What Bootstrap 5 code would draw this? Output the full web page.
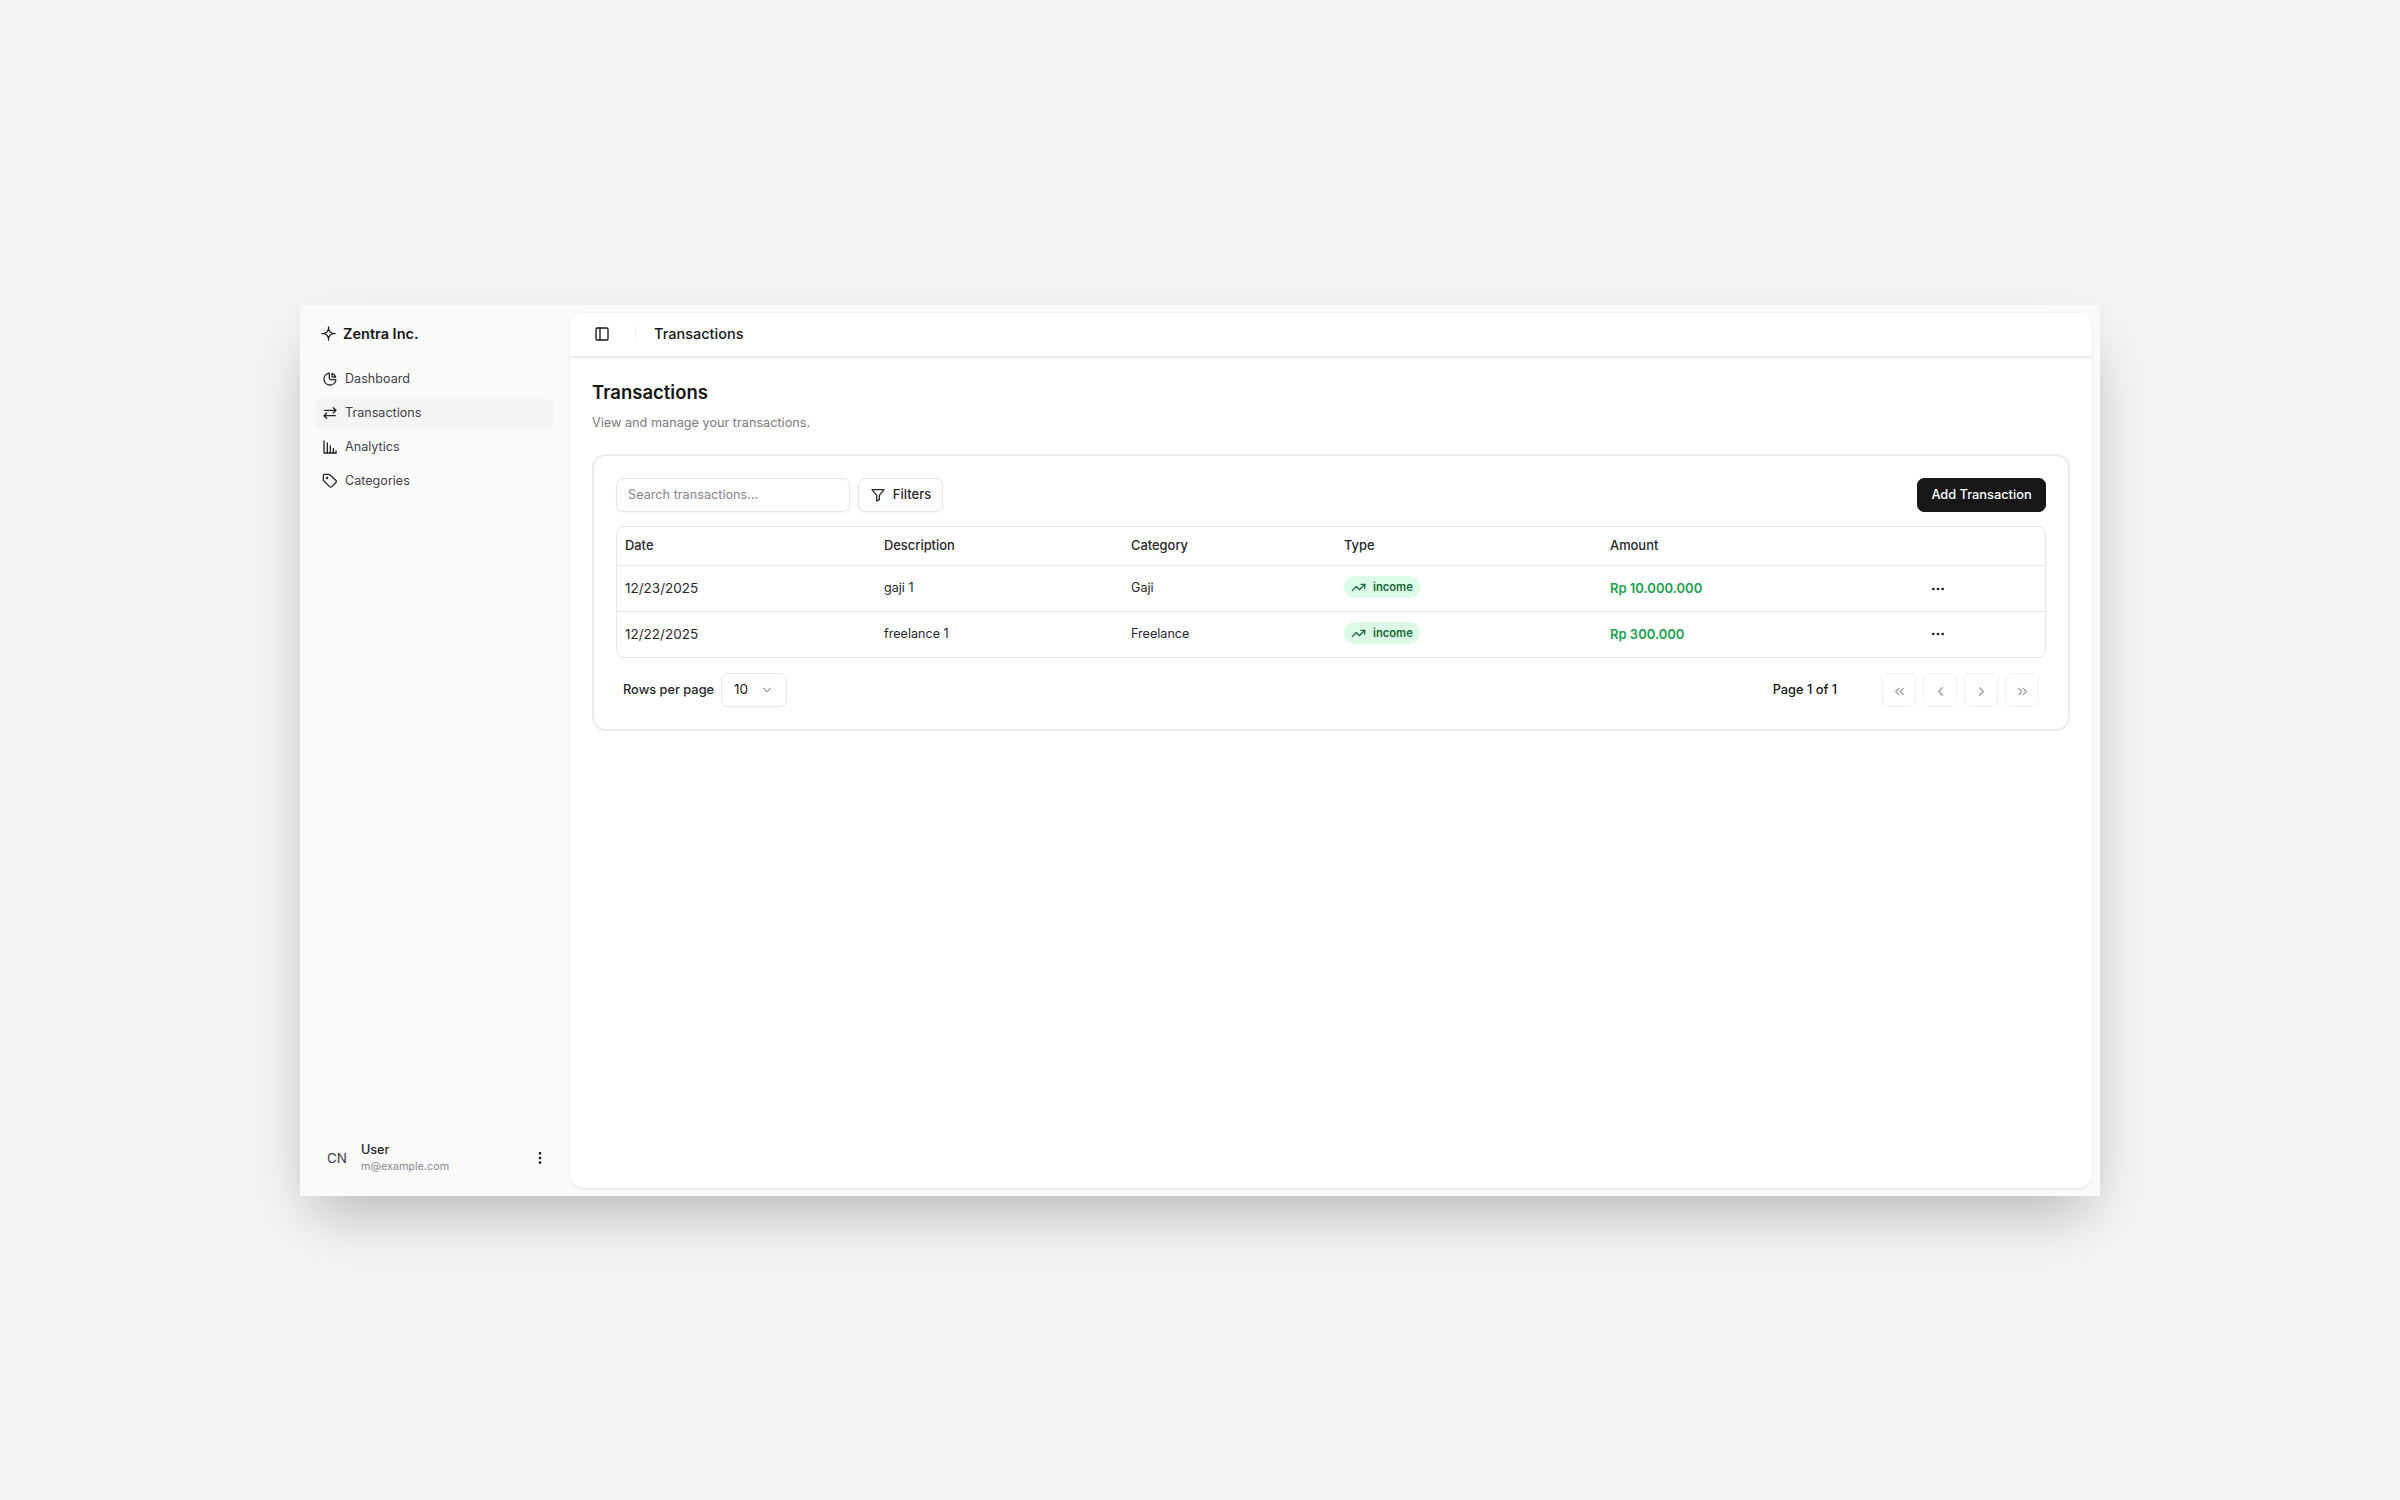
<!DOCTYPE html>
<html lang="en">
<head>
    <meta charset="UTF-8">
    <meta name="viewport" content="width=device-width, initial-scale=1.0">
    <title>Transactions</title>
    <link href="https://cdn.jsdelivr.net/npm/bootstrap@5.3.0/dist/css/bootstrap.min.css" rel="stylesheet">
    <style>
        body {
            background-color: #f3f4f6;
            color: #171717;
            font-family: Inter, "Liberation Sans", sans-serif;
            font-size: 13.5px;
        }
        svg { flex-shrink: 0; }
        .ico {
            fill: none;
            stroke: currentColor;
            stroke-width: 2;
            stroke-linecap: round;
            stroke-linejoin: round;
        }

        /* App window */
        .app-window {
            width: 1800px;
            height: 891px;
            background: #fafafa;
            box-shadow: 0 28px 56px -12px rgba(0, 0, 0, .25);
        }

        /* Sidebar */
        .side-col {
            width: 270px;
            flex-shrink: 0;
            padding: 0 16px 0 16px;
        }
        .brand-row {
            height: 44px;
            margin-top: 7px;
            padding-left: 5px;
            gap: 7px;
            font-size: 14.5px;
            font-weight: 600;
        }
        .side-link {
            height: 30px;
            margin-bottom: 4px;
            padding-left: 6px;
            gap: 7px;
            border-radius: 6px;
            color: #3f3f46;
            text-decoration: none;
            font-size: 12.6px;
        }
        .side-link svg { color: #27272a; margin-top: -1px; }
        .side-link.is-active { background: #f4f4f5; }
        .side-nav { margin-top: 9px; }
        .user-row { padding: 0 6px 21px 5px; }
        .user-avatar {
            width: 32px;
            height: 28px;
            font-size: 13.5px;
            color: #3f3f46;
        }
        .user-name { font-size: 12.6px; font-weight: 500; line-height: 17px; color: #27272a; margin-top: -1px; }
        .user-mail { font-size: 10.8px; line-height: 16px; color: #8b8b8f; margin-top: 1px; }

        /* Main panel */
        .main-panel {
            min-width: 0;
            margin: 8px 8px 8px 0;
            background: #fff;
            border-radius: 14px;
            box-shadow: 0 1px 3px rgba(0, 0, 0, .1);
        }
        .top-bar {
            height: 45px;
            padding-left: 24px;
            border-bottom: 2px solid #ececee;
        }
        .bar-sep {
            width: 1px;
            height: 14px;
            margin: 0 18px 0 25px;
            background: #eeeeef;
        }
        .bar-title { font-size: 14.5px; font-weight: 500; }
        .page-body { padding: 20px 22px 0 22px; }
        .page-title { font-size: 18.5px; font-weight: 600; line-height: 28px; margin: 0 0 7px 0; }
        .page-sub { font-size: 12.7px; line-height: 20px; color: #7b7b80; margin: 0 0 21px 0; }

        /* Transactions card */
        .tx-card {
            border: 2px solid #ececee;
            border-radius: 14px;
            padding: 22px;
            height: 277px;
        }
        .tx-search {
            width: 234px;
            height: 34px;
            padding: 0 11px;
            font-size: 12.7px;
            border: 1px solid #e7e7e9;
            border-radius: 7px;
            box-shadow: 0 1px 2px rgba(0, 0, 0, .04);
        }
        .tx-search::placeholder { color: #85858a; }
        .tx-filter {
            width: 85px;
            height: 34px;
            margin-left: 8px;
            padding: 0;
            gap: 7px;
            font-size: 13px;
            font-weight: 500;
            color: #27272a;
            border: 1px solid #e7e7e9;
            border-radius: 7px;
            box-shadow: 0 1px 2px rgba(0, 0, 0, .04);
        }
        .tx-add {
            width: 129px;
            height: 34px;
            padding: 0;
            font-size: 12.8px;
            font-weight: 500;
            background: #171717;
            border-color: #171717;
            border-radius: 7px;
            color: #fff;
        }
        .tx-table-wrap {
            margin-top: 14px;
            border: 1px solid #e7e7e9;
            border-radius: 8px;
            overflow: hidden;
        }
        .tx-table {
            table-layout: fixed;
            margin: 0;
            font-size: 12.6px;
            color: #27272a;
        }
        .tx-table th, .tx-table td {
            padding: 0 8px;
            vertical-align: middle;
            border-color: #e7e7e9;
            color: #27272a;
        }
        .tx-table th { height: 39px; font-weight: 500; font-size: 12.9px; }
        .tx-table td { height: 46px; }
        .tx-table td:first-child { font-size: 13.5px; }
        .tx-table tr:last-child td { border-bottom: 0; height: 45px; }
        .tx-table th:nth-child(1) { width: 259px; }
        .tx-table th:nth-child(2) { width: 247px; }
        .tx-table th:nth-child(3) { width: 213px; }
        .tx-table th:nth-child(4) { width: 266px; }
        .tx-table th:nth-child(5) { width: 314px; }
        .income-pill {
            height: 22px;
            padding: 0 7px 0 7px;
            gap: 7px;
            background: #dcfce7;
            color: #166534;
            border-radius: 11px;
            font-size: 11.2px;
            font-weight: 600;
        }
        .tx-table td.amount-text { color: #1a9f50; font-weight: 600; font-size: 13px; }
        .dots-btn { color: #18181b; margin-left: 6px; }

        /* Pager */
        .pager-row { padding: 15px 7px 0 7px; }
        .rows-label { font-size: 12.8px; font-weight: 500; color: #27272a; }
        .rows-picker {
            width: 66px;
            height: 34px;
            margin-left: 7px;
            padding: 0 12px;
            font-size: 13.5px;
            border: 1px solid #e7e7e9;
            border-radius: 7px;
            box-shadow: 0 1px 2px rgba(0, 0, 0, .04);
        }
        .picker-caret { color: #a1a1aa; }
        .page-info { font-size: 12.8px; font-weight: 500; margin-right: 45px; }
        .page-btn {
            width: 34px;
            height: 34px;
            padding: 0;
            border: 1px solid #f0f0f1;
            border-radius: 7px;
            color: #9a9a9f;
            background: #fff;
        }
        .pager-btns { gap: 7px; }
    </style>
</head>
<body>
    <div class="d-flex justify-content-center align-items-center min-vh-100">
        <div class="app-window d-flex">

            <!-- Sidebar -->
            <aside class="side-col d-flex flex-column">
                <div class="brand-row d-flex align-items-center">
                    <svg width="15" height="15" viewBox="0 0 24 24" class="ico"><path d="M12 5 14.5 9.5 19 12 14.5 14.5 12 19 9.5 14.5 5 12 9.5 9.5Z"/><path d="M12 1.5V4M12 20v2.5M1.5 12H4M20 12h2.5"/></svg>
                    <span>Zentra Inc.</span>
                </div>
                <nav class="side-nav">
                    <a class="side-link d-flex align-items-center" href="#">
                        <svg width="16" height="16" viewBox="0 0 24 24" class="ico"><path d="M10 3.2a9 9 0 1 0 10.8 10.8 1 1 0 0 0-1-1H13a2 2 0 0 1-2-2V4a.9.9 0 0 0-1-.8"/><path d="M15 3.5A9 9 0 0 1 20.5 9H16a1 1 0 0 1-1-1Z"/></svg>
                        <span>Dashboard</span>
                    </a>
                    <a class="side-link is-active d-flex align-items-center" href="#">
                        <svg width="16" height="16" viewBox="0 0 24 24" class="ico"><path d="M21 8H4M17 4l4 4-4 4"/><path d="M3 16h17M7 12l-4 4 4 4"/></svg>
                        <span>Transactions</span>
                    </a>
                    <a class="side-link d-flex align-items-center" href="#">
                        <svg width="16" height="16" viewBox="0 0 24 24" class="ico"><path d="M3 3v18h18"/><path d="M8 21V6M12.5 21V10M17 21v-7M21 21v-3"/></svg>
                        <span>Analytics</span>
                    </a>
                    <a class="side-link d-flex align-items-center" href="#">
                        <svg width="16" height="16" viewBox="0 0 24 24" class="ico"><path d="M11.6 2.6A2 2 0 0 0 10.2 2H4a2 2 0 0 0-2 2v6.2a2 2 0 0 0 .6 1.4l8.7 8.8a2.4 2.4 0 0 0 3.4 0l6.1-6.1a2.4 2.4 0 0 0 0-3.4Z"/><circle cx="7.5" cy="7.5" r=".8"/></svg>
                        <span>Categories</span>
                    </a>
                </nav>
                <div class="user-row d-flex align-items-center mt-auto">
                    <div class="user-avatar d-flex align-items-center justify-content-center me-2">CN</div>
                    <div class="flex-grow-1">
                        <div class="user-name">User</div>
                        <div class="user-mail">m@example.com</div>
                    </div>
                    <svg width="16" height="16" viewBox="0 0 24 24" class="ico"><circle cx="12" cy="5" r="1"/><circle cx="12" cy="12" r="1"/><circle cx="12" cy="19" r="1"/></svg>
                </div>
            </aside>

            <!-- Main -->
            <main class="main-panel flex-grow-1">
                <header class="top-bar d-flex align-items-center">
                    <svg width="16" height="16" viewBox="0 0 24 24" class="ico"><rect x="3" y="3" width="18" height="18" rx="2"/><path d="M9 3v18"/></svg>
                    <div class="bar-sep"></div>
                    <span class="bar-title">Transactions</span>
                </header>
                <div class="page-body">
                    <h1 class="page-title">Transactions</h1>
                    <p class="page-sub">View and manage your transactions.</p>
                    <div class="tx-card">
                        <div class="d-flex align-items-center">
                            <input class="form-control tx-search" type="text" placeholder="Search transactions...">
                            <button class="btn tx-filter d-flex align-items-center justify-content-center" type="button">
                                <svg width="16" height="16" viewBox="0 0 24 24" class="ico"><path d="M3 4h18l-7 8.5V19l-4 2v-8.5Z"/></svg>
                                Filters
                            </button>
                            <button class="btn tx-add ms-auto" type="button">Add Transaction</button>
                        </div>
                        <div class="tx-table-wrap">
                            <table class="table tx-table">
                                <thead>
                                    <tr><th>Date</th><th>Description</th><th>Category</th><th>Type</th><th>Amount</th><th></th></tr>
                                </thead>
                                <tbody>
                                    <tr>
                                        <td>12/23/2025</td>
                                        <td>gaji 1</td>
                                        <td>Gaji</td>
                                        <td><span class="income-pill d-inline-flex align-items-center"><svg width="15" height="15" viewBox="0 0 24 24" class="ico"><path d="M22 7l-8.5 8.5-5-5L2 17"/><path d="M16 7h6v6"/></svg>income</span></td>
                                        <td class="amount-text">Rp 10.000.000</td>
                                        <td><svg class="ico dots-btn" width="16" height="16" viewBox="0 0 24 24"><circle cx="5" cy="12" r="1"/><circle cx="12" cy="12" r="1"/><circle cx="19" cy="12" r="1"/></svg></td>
                                    </tr>
                                    <tr>
                                        <td>12/22/2025</td>
                                        <td>freelance 1</td>
                                        <td>Freelance</td>
                                        <td><span class="income-pill d-inline-flex align-items-center"><svg width="15" height="15" viewBox="0 0 24 24" class="ico"><path d="M22 7l-8.5 8.5-5-5L2 17"/><path d="M16 7h6v6"/></svg>income</span></td>
                                        <td class="amount-text">Rp 300.000</td>
                                        <td><svg class="ico dots-btn" width="16" height="16" viewBox="0 0 24 24"><circle cx="5" cy="12" r="1"/><circle cx="12" cy="12" r="1"/><circle cx="19" cy="12" r="1"/></svg></td>
                                    </tr>
                                </tbody>
                            </table>
                        </div>
                        <div class="pager-row d-flex align-items-center">
                            <span class="rows-label">Rows per page</span>
                            <div class="rows-picker d-flex align-items-center justify-content-between">
                                <span>10</span>
                                <svg width="14" height="14" viewBox="0 0 24 24" class="ico picker-caret"><path d="M6 9l6 6 6-6"/></svg>
                            </div>
                            <span class="page-info ms-auto">Page 1 of 1</span>
                            <div class="pager-btns d-flex">
                                <button class="btn page-btn" type="button"><svg width="15" height="15" viewBox="0 0 24 24" class="ico"><path d="M11 17l-5-5 5-5M18 17l-5-5 5-5"/></svg></button>
                                <button class="btn page-btn" type="button"><svg width="15" height="15" viewBox="0 0 24 24" class="ico"><path d="M15 18l-6-6 6-6"/></svg></button>
                                <button class="btn page-btn" type="button"><svg width="15" height="15" viewBox="0 0 24 24" class="ico"><path d="M9 18l6-6-6-6"/></svg></button>
                                <button class="btn page-btn" type="button"><svg width="15" height="15" viewBox="0 0 24 24" class="ico"><path d="M6 17l5-5-5-5M13 17l5-5-5-5"/></svg></button>
                            </div>
                        </div>
                    </div>
                </div>
            </main>
        </div>
    </div>
    <script src="https://cdn.jsdelivr.net/npm/bootstrap@5.3.0/dist/js/bootstrap.bundle.min.js"></script>
</body>
</html>
